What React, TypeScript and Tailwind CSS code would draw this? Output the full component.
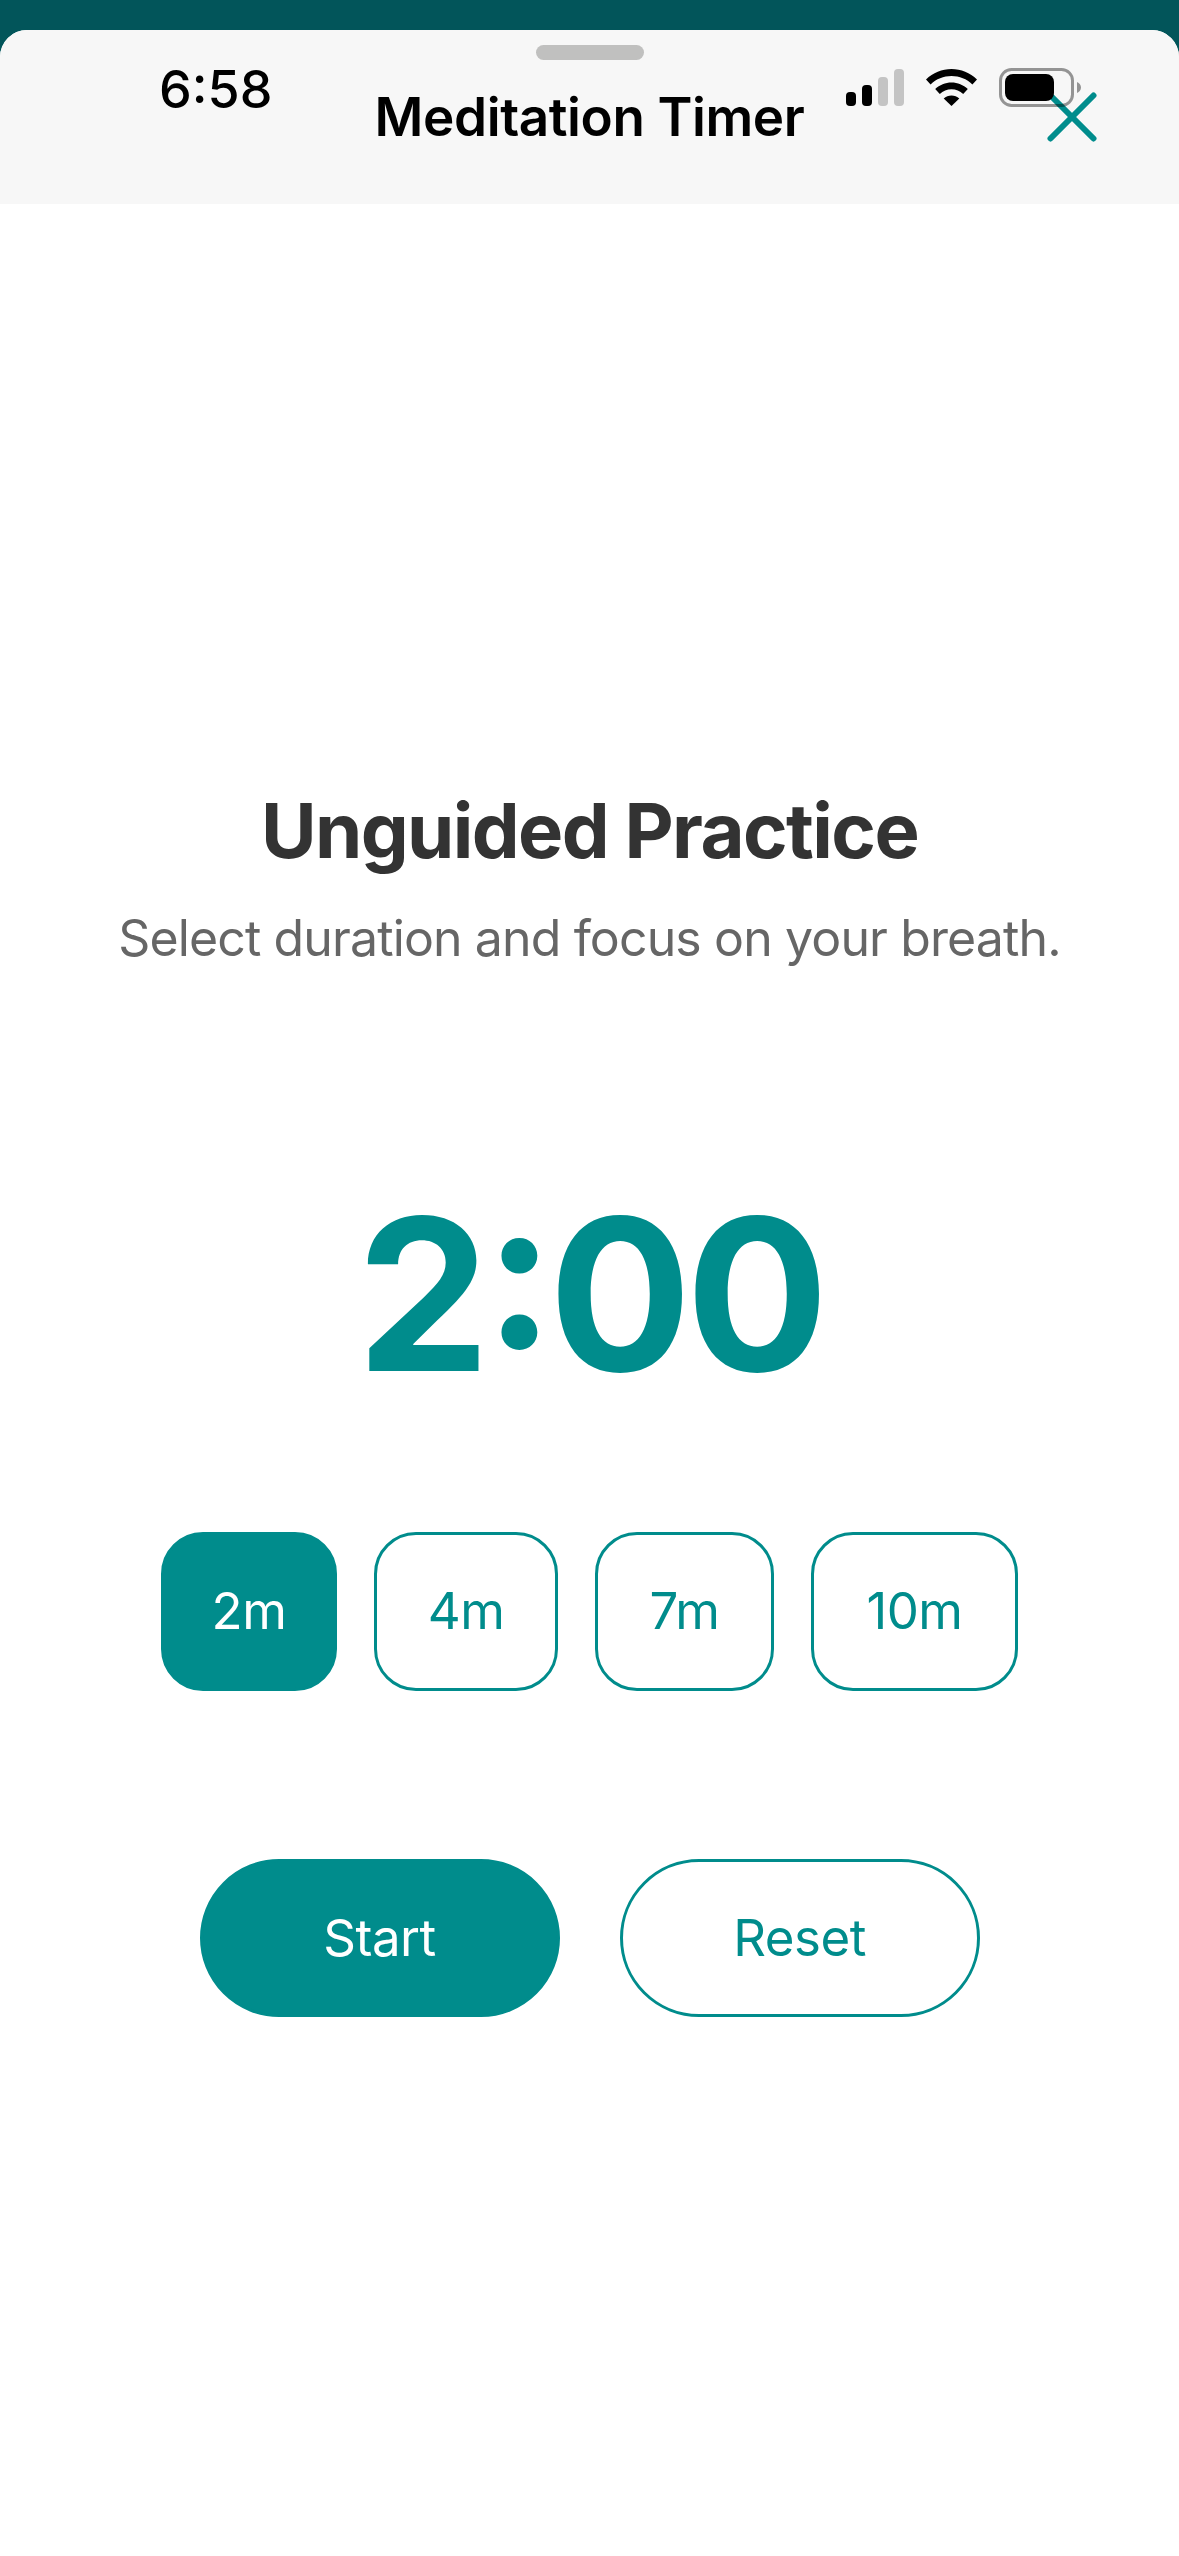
import React from 'react';

const durations = [
  { label: '2m', width: 'w-[176px]', active: true },
  { label: '4m', width: 'w-[184px]', active: false },
  { label: '7m', width: 'w-[179px]', active: false },
  { label: '10m', width: 'w-[207px]', active: false },
];

const StatusBar: React.FC = () => (
  <div className="absolute top-0 left-0 w-full h-[120px]">
    <span className="absolute left-[159px] top-[62px] text-[52px] leading-[56px] font-medium text-black">6:58</span>
    <svg className="absolute left-[846px] top-[69px]" width="58" height="37" viewBox="0 0 58 37">
      <rect x="0" y="23" width="10" height="14" rx="4" fill="#000" />
      <rect x="16" y="16" width="10" height="21" rx="4" fill="#000" />
      <rect x="32" y="8" width="10" height="29" rx="4" fill="#c4c4c4" />
      <rect x="48" y="0" width="10" height="37" rx="4" fill="#c4c4c4" />
    </svg>
    <svg className="absolute left-[926px] top-[69px]" width="51" height="37" viewBox="0 0 51 37" fill="#000">
      <path d="M25.5 0C35 0 44 3.8 51 10.4L46.4 15.4C40.8 10 33.4 7 25.5 7S10.2 10 4.6 15.4L0 10.4C7 3.8 16 0 25.5 0Z" />
      <path d="M25.5 13.5C31.6 13.5 37.4 15.9 41.8 20.1L37.2 25C34 22 29.9 20.3 25.5 20.3S17 22 13.8 25L9.2 20.1C13.6 15.9 19.4 13.5 25.5 13.5Z" />
      <path d="M25.5 26.5C28.4 26.5 31.2 27.6 33.3 29.5L25.5 37L17.7 29.5C19.8 27.6 22.6 26.5 25.5 26.5Z" />
    </svg>
    <svg className="absolute left-[999px] top-[68px]" width="83" height="39" viewBox="0 0 83 39">
      <rect x="1.5" y="1.5" width="72" height="36" rx="11" fill="none" stroke="#000" strokeOpacity="0.4" strokeWidth="3" />
      <rect x="6" y="6" width="49" height="27" rx="8" fill="#000" />
      <path d="M78 14C80.5 15 82 17 82 19.5S80.5 24 78 25Z" fill="#000" fillOpacity="0.4" />
    </svg>
  </div>
);

const App: React.FC = () => {
  return (
    <div className="relative h-[2556px] bg-[#02555a] pt-[30px] overflow-hidden font-['Inter',sans-serif]">
      <div className="h-full flex flex-col bg-white rounded-t-[27px] overflow-hidden">
        <header className="relative h-[174px] shrink-0 bg-[#f7f7f7] flex flex-col items-center">
          <div className="mt-[15px] w-[108px] h-[15px] rounded-full bg-[#c0c0bf]" />
          <h1 className="mt-[25px] text-[53px] leading-[64px] font-semibold tracking-[-0.4px] text-black">Meditation Timer</h1>
          <button type="button" className="absolute left-[1047px] top-[62px] text-[#008c8c]">
            <svg width="50" height="50" viewBox="0 0 50 50" fill="none" stroke="currentColor" strokeWidth="6" strokeLinecap="round">
              <path d="M46.5 3.5L3.5 46.5" />
              <path d="M3.5 3.5L46.5 46.5" />
            </svg>
          </button>
        </header>

        <main className="flex-1 flex flex-col items-center">
          <h2 className="mt-[582px] text-[76px] leading-[88px] font-bold tracking-[-1.6px] text-[#333]">Unguided Practice</h2>
          <p className="mt-[34px] text-[50px] leading-[60px] tracking-[-0.87px] text-[#666]">Select duration and focus on your breath.</p>
          <div className="mt-[196px] text-[212px] leading-[260px] font-bold tracking-[-6px] [font-feature-settings:'case'] text-[#008c8c]">2:00</div>
          <div className="mt-[108px] flex gap-[37px]">
            {durations.map((d) => (
              <button
                key={d.label}
                type="button"
                className={`${d.width} h-[159px] rounded-[42px] border-[3px] border-[#008c8c] text-[51px] tracking-[-0.5px] font-normal ${
                  d.active ? 'bg-[#008c8c] text-white' : 'bg-white text-[#008c8c]'
                }`}
              >
                {d.label}
              </button>
            ))}
          </div>
          <div className="mt-[168px] flex gap-[60px]">
            <button type="button" className="w-[360px] h-[158px] rounded-full border-[3px] border-[#008c8c] bg-[#008c8c] text-[51px] tracking-[-0.5px] font-normal text-white">Start</button>
            <button type="button" className="w-[360px] h-[158px] rounded-full border-[3px] border-[#008c8c] bg-white text-[51px] tracking-[-0.5px] font-normal text-[#008c8c]">Reset</button>
          </div>
        </main>
      </div>
      <StatusBar />
    </div>
  );
};

export default App;
